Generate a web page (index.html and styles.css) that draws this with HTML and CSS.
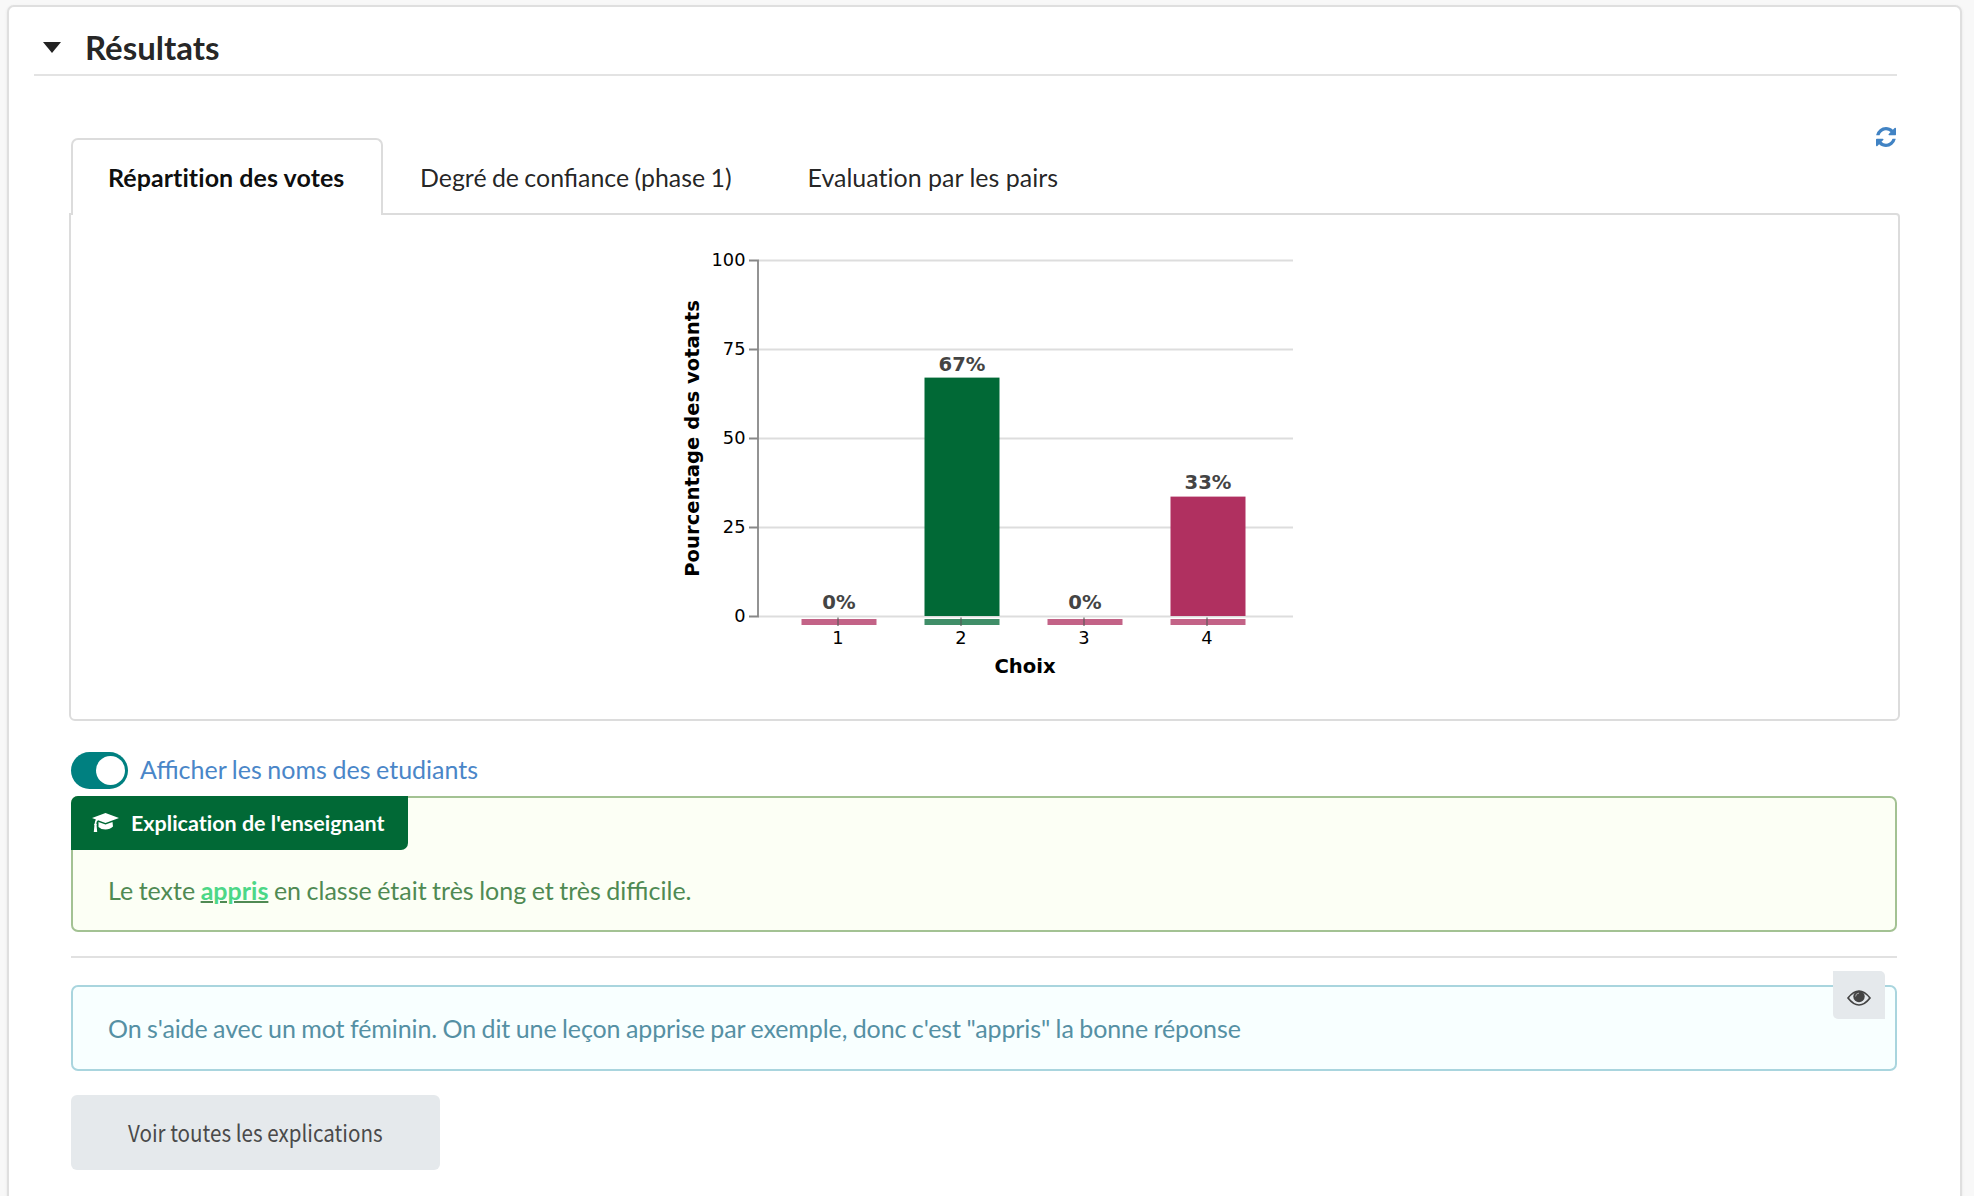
FILE: index.html
```html
<!DOCTYPE html>
<html lang="fr">
<head>
<meta charset="utf-8">
<title>Résultats</title>
<link rel="stylesheet" href="styles.css">
</head>
<body>
<main class="card">
  <header class="card-header">
    <svg class="caret" viewBox="0 0 18 11"><path d="M0 0H18L9 11Z"/></svg>
    <h1 class="title">Résultats</h1>
  </header>
  <section class="content">
    <nav class="tabs">
      <a class="tab tab-active"><span>Répartition des votes</span></a>
      <a class="tab"><span class="tab-confidence">Degré de confiance (phase 1)</span></a>
      <a class="tab"><span class="tab-peers">Evaluation par les pairs</span></a>
      <svg class="refresh" viewBox="0 0 1536 1536"><path d="M1511 928q0 5-1 7-64 268-268 434.500T764 1536q-146 0-282.500-55T238 1324l-129 129q-19 19-45 19t-45-19-19-45V960q0-26 19-45t45-19h448q26 0 45 19t19 45-19 45l-137 137q71 66 161 102t187 36q134 0 250-65t186-179q11-17 53-117 8-23 30-23h192q13 0 22.500 9.500t9.500 22.500zm25-800v448q0 26-19 45t-45 19h-448q-26 0-45-19t-19-45 19-45l138-138Q969 256 768 256q-134 0-250 65T332 500q-11 17-53 117-8 23-30 23H50q-13 0-22.500-9.500T18 608v-7q65-268 270-434.500T768 0q146 0 284 55.500T1297 212l130-129q19-19 45-19t45 19 19 45z"/></svg>
    </nav>
    <div class="panel">
      <svg class="chart" viewBox="670 240 640 450" width="640" height="450">
        <g class="grid"><path d="M758 260.500H1293M758 349.500H1293M758 438.500H1293M758 527.500H1293M758 616.500H1293"/></g>
        <g class="axis"><path d="M749 260.500H758M749 349.500H758M749 438.500H758M749 527.500H758M749 616.500H758M758 259.500V617.500"/></g>
        <rect class="good" x="924.500" y="377.600" width="75" height="238.400"/>
        <rect class="bad" x="1170.500" y="496.600" width="75" height="119.400"/>
        <g class="base">
          <rect class="bad" x="801.500" y="619" width="75" height="6"/>
          <rect class="good" x="924.500" y="619" width="75" height="6"/>
          <rect class="bad" x="1047.500" y="619" width="75" height="6"/>
          <rect class="bad" x="1170.500" y="619" width="75" height="6"/>
        </g>
        <g class="ticks"><path d="M838 617.500V626M961 617.500V626M1084 617.500V626M1207 617.500V626"/></g>
        <g class="label end">
          <text x="745.500" y="266">100</text><text x="745.500" y="355">75</text><text x="745.500" y="444">50</text><text x="745.500" y="533">25</text><text x="745.500" y="622">0</text>
        </g>
        <g class="label">
          <text x="838" y="644">1</text><text x="961" y="644">2</text><text x="1084" y="644">3</text><text x="1207" y="644">4</text>
        </g>
        <g class="value">
          <text x="839" y="608.500">0%</text><text x="962" y="371">67%</text><text x="1085" y="608.500">0%</text><text x="1208" y="489">33%</text>
        </g>
        <text class="axis-title" x="1025" y="672.500">Choix</text>
        <text class="axis-title" transform="translate(698.500 438.500) rotate(-90)">Pourcentage des votants</text>
      </svg>
    </div>
    <label class="toggle"><span class="switch"><span class="knob"></span></span><span class="toggle-text">Afficher les noms des etudiants</span></label>
    <article class="teacher">
      <div class="ribbon">
        <svg class="cap" viewBox="0 0 27 20"><path d="M13.500 0L27 5L13.500 10L6 7.300Q4.500 8 4.300 10.500Q5.300 11.200 4.600 12.400L5.200 19H1.800L2.400 12.400Q1.500 11.200 2.700 10.500Q2.800 8 3.900 6.500L0 5Z"/><path d="M6.500 9L13.500 11.600L20.500 9L21 13.500Q18 16.500 13.500 16.500Q9 16.500 6.500 14Z"/></svg>
        <span>Explication de l'enseignant</span>
      </div>
      <p class="teacher-text">Le texte <u class="word"><b>appris</b></u> en classe était très long et très difficile.</p>
    </article>
    <hr class="divider">
    <article class="student">
      <p class="student-text">On s'aide avec un mot féminin. On dit une leçon apprise par exemple, donc c'est "appris" la bonne réponse</p>
      <button class="eye-button" aria-label="Masquer"><svg class="eye" viewBox="0 0 24 16"><path class="eye-line" d="M1 8Q12-6 23 8Q12 22 1 8Z"/><circle cx="12" cy="6.500" r="5.700"/><path class="eye-glint" d="M8.600 6.500Q8.600 3.300 12 3.100"/></svg></button>
    </article>
    <button class="show-all"><span class="show-all-text">Voir toutes les explications</span></button>
  </section>
</main>
</body>
</html>
```
FILE: styles.css
```css
* { box-sizing: border-box; }
body { margin: 0; height: 1196px; overflow: hidden; background: #f8f8f8; font-family: Lato, sans-serif; font-size: 25px; color: rgba(0,0,0,.87); padding: 5px 12px 0 7px; }
.card { height: 1220px; background: #fff; border: 2px solid #dfdfdf; border-radius: 7px; padding: 0 63px 0 25px; box-shadow: 0 1px 3px #e4e4e4; }
.card-header { display: flex; align-items: center; height: 69px; border-bottom: 2px solid #e3e3e3; padding: 13px 0 0 9px; }
.caret { width: 18px; height: 11px; margin: 0 24px 0 0; fill: #222; }
.title { margin: 0; font-size: 33px; line-height: 40px; font-weight: 700; }
.content { padding-left: 37px; }
.tabs { display: flex; height: 75px; margin-top: 62px; }
.tab { display: flex; align-items: center; padding: 2px 38px 0 37px; white-space: nowrap; }
.tab-active { position: relative; width: 312px; margin-bottom: -2px; padding: 0 0 2px 35px; font-weight: 700; background: #fff; border: 2px solid #dcdcdc; border-bottom: 0; border-radius: 7px 7px 0 0; color: rgba(0,0,0,.95); font-variant-ligatures: none; letter-spacing: .06px; }
.tab-confidence { font-size: 24.900px; word-spacing: -1px; }
.tab-peers { font-variant-ligatures: none; margin-left: 1px; }
.refresh { width: 20px; height: 20px; margin: -11px 1px 0 auto; fill: #4183c4; }
.panel { height: 508px; margin: 0 -3px 0 -2px; border: 2px solid #dcdcdc; border-radius: 0 4px 6px 6px; padding: 25px 0 0 599px; }
.chart { display: block; font-family: "DejaVu Sans", sans-serif; text-anchor: middle; }
.grid { stroke: #ddd; stroke-width: 1.800; }
.axis, .ticks { stroke: #888; stroke-width: 1.800; fill: none; }
.ticks { stroke: #555; opacity: .6; }
.good { fill: #016936; }
.bad { fill: #b03060; }
.base { opacity: .75; }
.label { font-size: 17.800px; }
.end { text-anchor: end; }
.value { font-size: 19.600px; font-weight: 700; fill: #444; }
.axis-title { font-size: 19.600px; font-weight: 700; }
.toggle { display: flex; height: 37px; margin: 31px 0 7px; align-items: center; gap: 12px; color: #4a86c8; }
.switch { display: flex; justify-content: flex-end; align-items: center; width: 57px; height: 37px; border-radius: 19px; background: #008080; padding-right: 3px; }
.knob { width: 29px; height: 29px; border-radius: 50%; background: #fff; }
.toggle-text { line-height: 30px; margin-top: -4px; word-spacing: -.8px; }
.teacher { height: 136px; background: #fcfff5; border: 2px solid #a3c293; border-radius: 7px; color: #4f8a53; }
.ribbon { display: flex; align-items: center; width: 337px; height: 54px; margin: -2px 0 0 -2px; padding-left: 21px; gap: 12px; background: #016936; border-radius: 7px 0 7px 0; color: #fff; font-size: 21.500px; font-weight: 700; white-space: nowrap; font-variant-ligatures: none; }
.cap { width: 27px; height: 20px; fill: #fff; flex: none; }
.teacher-text { margin: 24px 0 0 35px; line-height: 32px; white-space: nowrap; word-spacing: -.9px; }
.word { text-decoration-thickness: 2px; }
.word b { color: #4cd787; }
.divider { height: 2px; margin: 24px 0 27px; border: 0; background: #e1e1e1; }
.student { position: relative; display: flex; align-items: center; height: 86px; background: #f8ffff; border: 2px solid #a9d5de; border-radius: 7px; padding-left: 35px; color: #5590a4; }
.student-text { margin: 0; white-space: nowrap; letter-spacing: -.1px; word-spacing: -.8px; }
.eye-button { position: absolute; right: 10px; top: -16px; width: 52px; height: 48px; display: grid; place-items: center; padding: 5px 0 0; border: 0; border-radius: 0 5px 0 5px; background: #e5e9ec; }
.eye { width: 24px; height: 16px; fill: #444; }
.eye-line { fill: none; stroke: #444; stroke-width: 1.700; }
.eye-glint { fill: none; stroke: #aaa; stroke-width: 1; }
.show-all { display: grid; place-items: center; width: 369px; height: 75px; margin-top: 24px; padding: 0 0 1px; border: 0; border-radius: 6px; background: #e5e9ec; color: #4a4a4a; font: 23px "Noto Sans CJK SC", sans-serif; white-space: nowrap; }
.show-all-text { transform: scaleX(.895); }
```
